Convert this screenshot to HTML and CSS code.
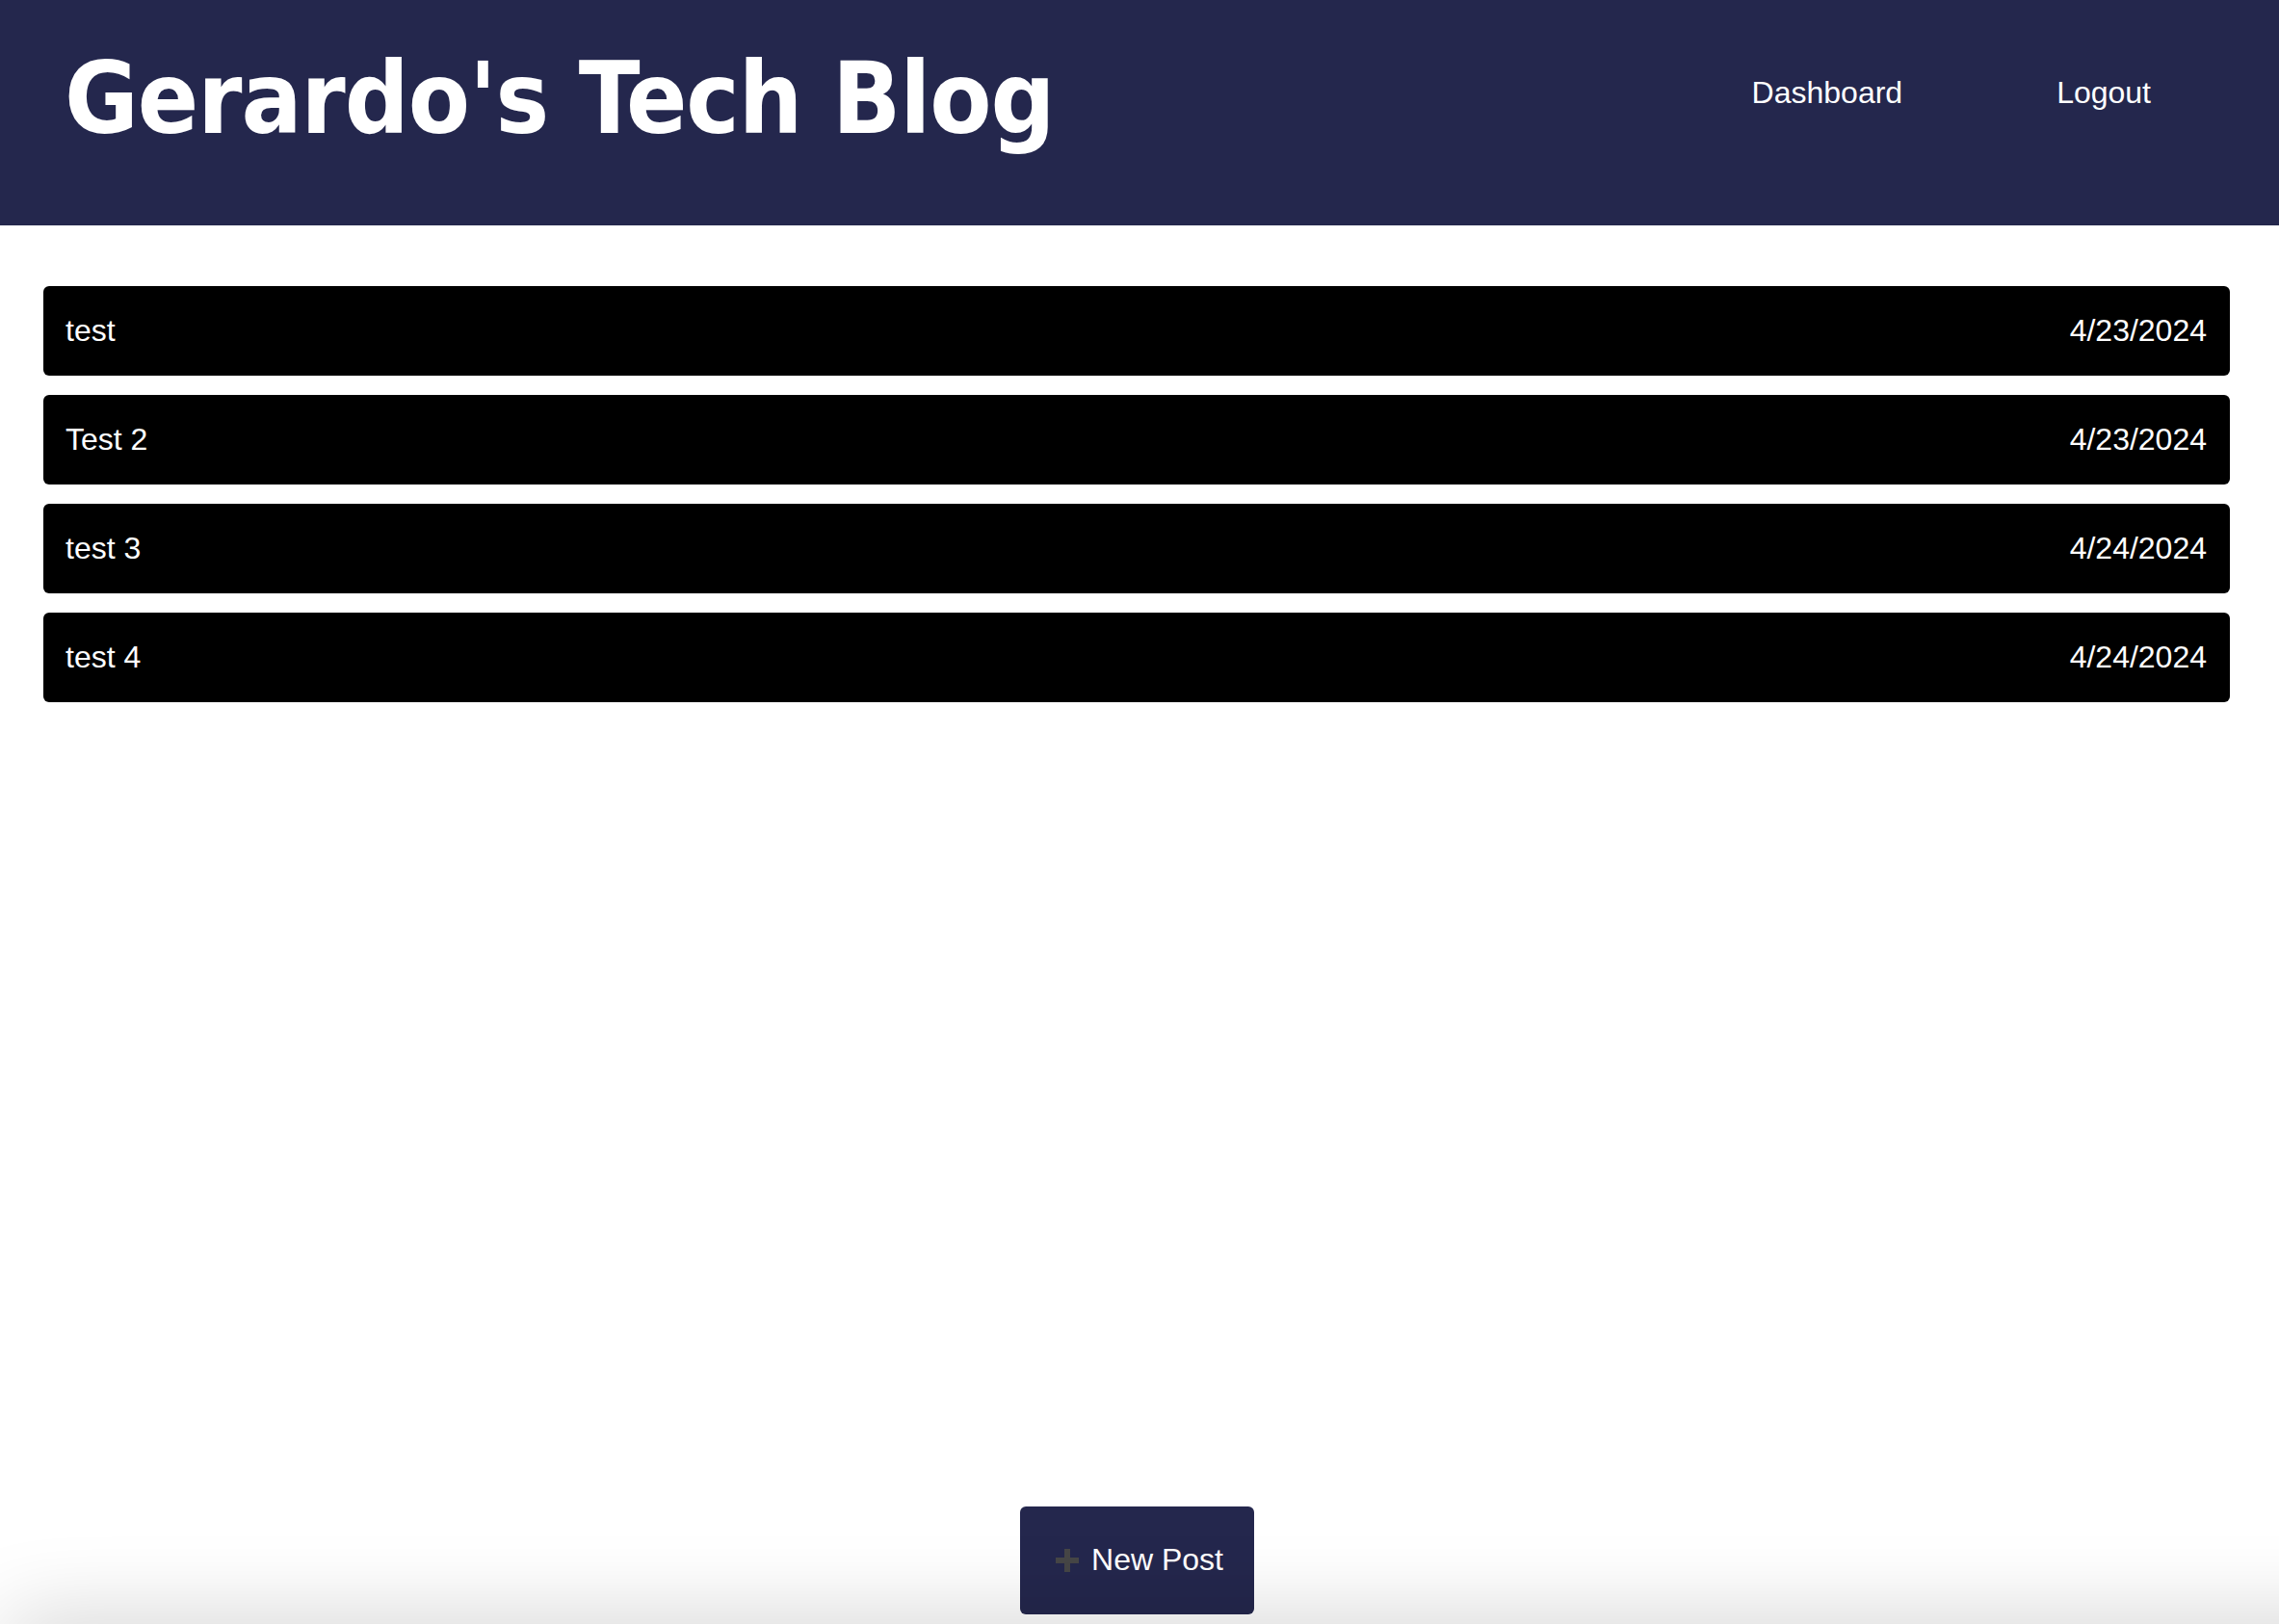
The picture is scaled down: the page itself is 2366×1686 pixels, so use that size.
FILE: index.html
```html
<!DOCTYPE html>
<html lang="en">
<head>
<meta charset="utf-8">
<title>Gerardo's Tech Blog</title>
<link rel="stylesheet" href="styles.css">
</head>
<body>
<div class="page">
  <header class="site-header">
    <h1 class="site-title">Gerardo's Tech Blog</h1>
    <nav class="site-nav">
      <a class="nav-link" href="#">Dashboard</a>
      <a class="nav-link" href="#">Logout</a>
    </nav>
  </header>
  <main class="posts">
    <a class="post-row" href="#"><span class="post-title">test</span><span class="post-date">4/23/2024</span></a>
    <a class="post-row" href="#"><span class="post-title">Test 2</span><span class="post-date">4/23/2024</span></a>
    <a class="post-row" href="#"><span class="post-title">test 3</span><span class="post-date">4/24/2024</span></a>
    <a class="post-row" href="#"><span class="post-title">test 4</span><span class="post-date">4/24/2024</span></a>
  </main>
  <div class="actions">
    <button class="new-post" type="button">
      <svg class="plus" width="24" height="24" viewBox="0 0 24 24" aria-hidden="true"><path d="M9 0h6v9h9v6h-9v9H9v-9H0V9h9z" fill="#464646"/></svg>
      <span>New Post</span>
    </button>
  </div>
  <div class="footer-shadow"></div>
</div>
</body>
</html>
```
FILE: styles.css
```css
html, body {
  margin: 0;
  padding: 0;
  background: #ffffff;
}

.page {
  height: 100vh;
  display: flex;
  flex-direction: column;
  overflow: hidden;
  font-family: "Liberation Sans", Arial, sans-serif;
}

.site-header {
  flex-shrink: 0;
  box-sizing: border-box;
  height: 234px;
  background: #24274d;
  color: #ffffff;
  display: flex;
  justify-content: space-between;
  align-items: flex-start;
  padding: 40px 53px 0 67px;
}

.site-title {
  margin: 0;
  font-family: "DejaVu Sans Condensed", "DejaVu Sans", sans-serif;
  font-stretch: condensed;
  font-weight: bold;
  font-size: 104px;
  line-height: 125px;
  letter-spacing: -1px;
}

.site-nav {
  display: flex;
  margin-top: 38px;
}

.nav-link {
  color: #ffffff;
  text-decoration: none;
  font-size: 32px;
  line-height: 36px;
  padding: 0 80px;
}

.posts {
  flex: 1;
  display: flex;
  flex-direction: column;
  gap: 20px;
  padding: 63px 51px 0 45px;
}

.post-row {
  display: flex;
  justify-content: space-between;
  background: #000000;
  color: #ffffff;
  text-decoration: none;
  border-radius: 6px;
  font-size: 32px;
  line-height: 37px;
  padding: 28px 24px 28px 23px;
}

.actions {
  flex-shrink: 0;
  display: flex;
  justify-content: center;
  padding: 0 5px 10px 0;
}

.new-post {
  display: inline-flex;
  align-items: center;
  gap: 13px;
  background: #24274d;
  color: #ffffff;
  border: none;
  border-radius: 6px;
  font-family: "Liberation Sans", Arial, sans-serif;
  font-size: 32px;
  line-height: 37px;
  padding: 37px 32px 38px 37px;
  cursor: pointer;
}

.plus {
  display: block;
  flex-shrink: 0;
}

.footer-shadow {
  flex-shrink: 0;
  height: 60px;
  margin-bottom: -60px;
  margin-right: -200px;
  margin-left: 8px;
  background: #ffffff;
  box-shadow: 0 0 90px rgba(0, 0, 0, 0.22);
}
```
